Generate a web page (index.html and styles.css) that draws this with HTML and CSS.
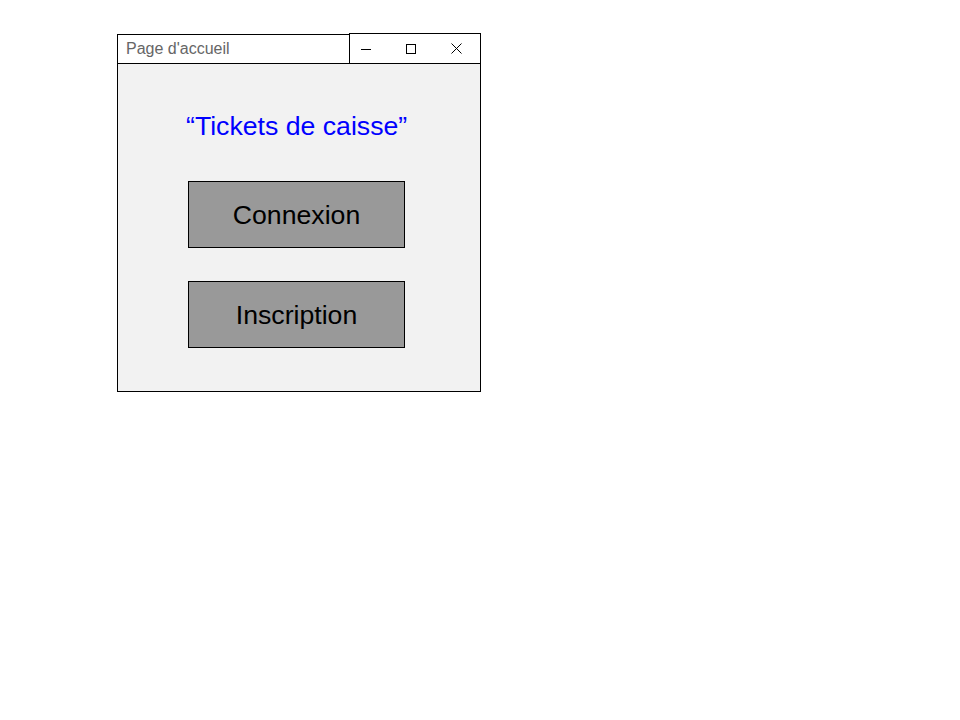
FILE: index.html
```html
<!DOCTYPE html>
<html>
<head>
	<meta charset="utf-8">
	<title>Page d'accueil</title>
	<link rel="stylesheet" href="styles.css">
</head>
<body>
	<div class="window">
		<div class="titlebar">
			<div class="title">Page d'accueil</div>
			<div class="controls">
				<svg width="10" height="10" viewBox="0 0 10 10"><path d="M0 5.5H10" stroke="#000" stroke-width="1"/></svg>
				<svg width="10" height="10" viewBox="0 0 10 10"><rect x="0.5" y="0.5" width="9" height="9" fill="none" stroke="#000" stroke-width="1"/></svg>
				<svg width="11" height="11" viewBox="0 0 11 11"><path d="M0.5 0.5L10.5 10.5M10.5 0.5L0.5 10.5" stroke="#000" stroke-width="1"/></svg>
			</div>
		</div>
		<div class="content">
			<div class="heading">&ldquo;Tickets de caisse&rdquo;</div>
			<div class="btn">Connexion</div>
			<div class="btn">Inscription</div>
		</div>
	</div>
</body>
</html>
```

FILE: styles.css
```css
body {
  margin: 0;
  background: #fff;
  font-family: "Liberation Sans", Arial, sans-serif;
}

.window {
  margin: 33px 0 0 117px;
  width: 364px;
}

.titlebar {
  display: flex;
  align-items: flex-end;
}

.title {
  width: 232px;
  height: 30px;
  border: 1px solid #000;
  border-right: none;
  padding-left: 8px;
  box-sizing: border-box;
  font-size: 16px;
  line-height: 28px;
  color: #666;
}

.controls {
  width: 132px;
  height: 31px;
  box-sizing: border-box;
  border: 1px solid #000;
  display: flex;
  align-items: center;
  padding-left: 11px;
  gap: 35px;
}

.controls svg {
  display: block;
}

.content {
  height: 328px;
  box-sizing: border-box;
  border: 1px solid #000;
  border-top: none;
  background: #f2f2f2;
  padding: 48px 0 0 70px;
}

.heading {
  width: 217px;
  margin-left: -2px;
  color: #0000ff;
  font-size: 26.67px;
  line-height: 28px;
  white-space: nowrap;
  margin-bottom: 41px;
}

.btn {
  width: 217px;
  height: 67px;
  box-sizing: border-box;
  border: 1px solid #000;
  padding-top: 2px;
  background: #999;
  color: #000;
  font-size: 26.67px;
  display: flex;
  align-items: center;
  justify-content: center;
  margin-bottom: 33px;
}
```
